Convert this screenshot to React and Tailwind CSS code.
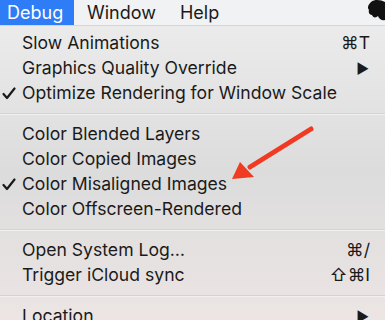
import React from 'react';

const Sep = () => (
  <div className="py-[7px]">
    <div className="h-[2px] bg-[#d4d2d2] border-b border-[#f2f0f0]" />
  </div>
);

const Check = () => (
  <svg className="absolute left-[2px] top-[6px]" width="14" height="13" viewBox="0 0 14 13">
    <path d="M1.5 7 L5 11 L12.5 1.5" fill="none" stroke="#1a1a1a" strokeWidth="2.2" strokeLinecap="round" strokeLinejoin="round" />
  </svg>
);

function Item({ label, checked, shortcut, submenu }) {
  return (
    <div className="h-[25px] flex items-center pl-[22px] pr-[15px] relative">
      {checked && <Check />}
      <span className="flex-1">{label}</span>
      {shortcut && <span>{shortcut}</span>}
      {submenu && <span className="text-[14px] pr-[1px]">▶</span>}
    </div>
  );
}

export default function App() {
  return (
    <div
      className="w-[385px] h-[320px] overflow-hidden relative text-[#1a1a1a]"
      style={{ fontFamily: 'Inter, "Noto Sans", sans-serif' }}
    >
      <div className="h-[26px] flex items-center bg-[#f1f2f4] border-b border-[#d6d6d8] text-[18px]">
        <div className="h-full flex items-center px-[7px] w-[74px] bg-[#2f7df6] text-white">Debug</div>
        <div className="ml-[13px]">Window</div>
        <div className="ml-[24px]">Help</div>
      </div>

      <div className="bg-gradient-to-b from-[#ebebeb] via-[#dcdcdc] to-[#ece5e4] pt-[5px] text-[17.6px] h-[294px]">
        <Item label="Slow Animations" shortcut="⌘T" />
        <Item label="Graphics Quality Override" submenu />
        <Item label="Optimize Rendering for Window Scale" checked />
        <Sep />
        <Item label="Color Blended Layers" />
        <Item label="Color Copied Images" />
        <Item label="Color Misaligned Images" checked />
        <Item label="Color Offscreen-Rendered" />
        <Sep />
        <Item label="Open System Log…" shortcut="⌘/" />
        <Item label="Trigger iCloud sync" shortcut="⇧⌘I" />
        <Sep />
        <Item label="Location" submenu />
      </div>

      <svg className="absolute right-0 top-0" width="18" height="22" viewBox="0 0 18 22">
        <path d="M4 2 C8 -1 14 0 18 2 L18 20 C15 21 12 19 11 16 C9 18 6 18 5 15 C3 15 1 13 2 10 C0 8 1 5 4 2 Z" fill="#111" />
      </svg>

      <svg className="absolute left-0 top-0 pointer-events-none" width="385" height="320">
        <line x1="311" y1="129" x2="250" y2="167" stroke="#f03a22" strokeWidth="5" strokeLinecap="round" />
        <polygon points="232,179 240,162 254,177" fill="#f03a22" />
      </svg>
    </div>
  );
}
